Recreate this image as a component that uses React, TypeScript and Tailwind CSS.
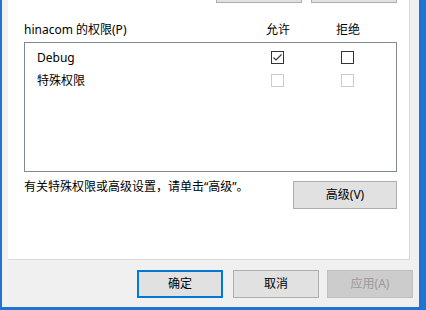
import type { ReactNode } from 'react'

const font = { fontFamily: '"Segoe UI", "Noto Sans", "Noto Sans CJK SC", sans-serif' }

function CheckBox({ checked = false, disabled = false }: { checked?: boolean; disabled?: boolean }) {
  return (
    <div
      className={`flex h-[13px] w-[13px] shrink-0 items-center justify-center border bg-white ${
        disabled ? 'border-[#cccccc]' : 'border-[#333333]'
      }`}
    >
      {checked ? (
        <svg width="11" height="11" viewBox="0 0 11 11" fill="none">
          <path d="M1.5 5.5 L4 8 L9.5 2.5" stroke="#333333" strokeWidth="1.1" />
        </svg>
      ) : null}
    </div>
  )
}

function Button({
  children,
  width,
  variant = 'normal',
  className = '',
}: {
  children: ReactNode
  width: string
  variant?: 'normal' | 'default' | 'disabled'
  className?: string
}) {
  const look =
    variant === 'default'
      ? 'border-2 border-[#0078d7] bg-[#e1e1e1] text-black'
      : variant === 'disabled'
        ? 'border border-[#bfbfbf] bg-[#cccccc] text-[#9a9a9a]'
        : 'border border-[#adadad] bg-[#e1e1e1] text-black'
  return (
    <div className={`flex h-[28px] shrink-0 items-center justify-center text-[12px] ${width} ${look} ${className}`}>
      {children}
    </div>
  )
}

function PermissionRow({ label, allow, deny, disabled }: { label: string; allow?: boolean; deny?: boolean; disabled?: boolean }) {
  return (
    <div className="flex h-[23px] items-center pl-[12px]">
      <span className="w-[234px] text-[12px] leading-4 text-black">{label}</span>
      <CheckBox checked={allow} disabled={disabled} />
      <div className="ml-[57px]">
        <CheckBox checked={deny} disabled={disabled} />
      </div>
    </div>
  )
}

export default function App() {
  return (
    <div className="flex h-[310px] w-[426px] overflow-hidden bg-[#1e74d0]" style={font}>
      <div className="ml-[2px] flex h-[307px] w-[417px] flex-col bg-[#f0f0f0]">
        {/* tab page */}
        <div className="ml-[6px] flex h-[260px] w-[402px] flex-col border-r border-b border-[#d9d9d9] bg-white pl-[16px] pr-[12px]">
          {/* bottom edge of the Add / Remove buttons above */}
          <div className="flex h-[3px] gap-[9px] pl-[192px]">
            <div className="h-[3px] w-[86px] border-x border-b border-[#adadad] bg-[#e1e1e1]" />
            <div className="h-[3px] w-[86px] border-x border-b border-[#adadad] bg-[#e1e1e1]" />
          </div>

          <div className="mt-[19px] flex h-4 items-center text-[12px] leading-4 text-black">
            <span className="w-[224px]">hinacom 的权限(P)</span>
            <span className="w-[60px] text-center">允许</span>
            <span className="ml-[10px] w-[60px] text-center">拒绝</span>
          </div>

          <div className="mt-[4px] h-[130px] border border-[#828790] bg-white pt-[3px]">
            <PermissionRow label="Debug" allow />
            <PermissionRow label="特殊权限" disabled />
          </div>

          <div className="mt-[7px] flex items-start justify-between">
            <span className="text-[12px] leading-4 text-black">有关特殊权限或高级设置，请单击“高级”。</span>
            <Button width="w-[104px]" className="mt-[2px]">
              高级(V)
            </Button>
          </div>
        </div>

        {/* dialog buttons */}
        <div className="mt-[10px] flex justify-end pr-[6px]">
          <Button width="w-[86px]" variant="default">
            确定
          </Button>
          <Button width="w-[86px]" className="ml-[10px]">
            取消
          </Button>
          <Button width="w-[86px]" variant="disabled" className="ml-[8px]">
            应用(A)
          </Button>
        </div>
      </div>
    </div>
  )
}
